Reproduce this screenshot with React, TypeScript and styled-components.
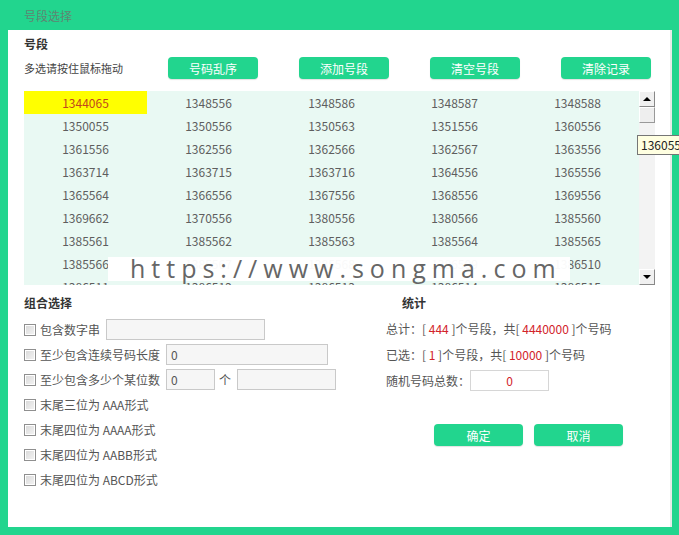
import React from "react";
import styled, { createGlobalStyle } from "styled-components";

const GREEN = "#22d58e";

const rows: string[][] = [
  ["1344065", "1348556", "1348586", "1348587", "1348588"],
  ["1350055", "1350556", "1350563", "1351556", "1360556"],
  ["1361556", "1362556", "1362566", "1362567", "1363556"],
  ["1363714", "1363715", "1363716", "1364556", "1365556"],
  ["1365564", "1366556", "1367556", "1368556", "1369556"],
  ["1369662", "1370556", "1380556", "1380566", "1385560"],
  ["1385561", "1385562", "1385563", "1385564", "1385565"],
  ["1385566", "1385567", "1385568", "1386509", "1386510"],
  ["1386511", "1386512", "1386513", "1386514", "1386515"],
];

const tools = ["号码乱序", "添加号段", "清空号段", "清除记录"];

const patterns = [
  "末尾三位为 AAA形式",
  "末尾四位为 AAAA形式",
  "末尾四位为 AABB形式",
  "末尾四位为 ABCD形式",
];

export default function App() {
  return (
    <>
      <GlobalStyle />
      <Page>
        <TitleBar>号段选择</TitleBar>
        <Panel>
          <Heading>号段</Heading>
          <Toolbar>
            <Hint>多选请按住鼠标拖动</Hint>
            {tools.map((t) => (
              <GreenButton key={t}>{t}</GreenButton>
            ))}
          </Toolbar>

          <ListBox>
            <Cells>
              {rows.map((row, ri) =>
                row.map((num, ci) => (
                  <Cell key={`${ri}-${ci}`} $selected={ri === 0 && ci === 0}>
                    {num}
                  </Cell>
                ))
              )}
            </Cells>
            <ScrollBar>
              <ScrollButton>
                <Arrow $up />
              </ScrollButton>
              <Thumb />
              <Track />
              <ScrollButton>
                <Arrow />
              </ScrollButton>
            </ScrollBar>
            <Watermark>https://www.songma.com</Watermark>
          </ListBox>

          <Bottom>
            <Column>
              <SubHeading>组合选择</SubHeading>
              <CheckRow>
                <Box />
                <Label>包含数字串</Label>
                <TextInput $w={159} defaultValue="" />
              </CheckRow>
              <CheckRow>
                <Box />
                <Label>至少包含连续号码长度</Label>
                <TextInput $w={162} defaultValue="0" />
              </CheckRow>
              <CheckRow>
                <Box />
                <Label>至少包含多少个某位数</Label>
                <TextInput $w={49} defaultValue="0" />
                <Unit>个</Unit>
                <TextInput $w={99} defaultValue="" />
              </CheckRow>
              {patterns.map((p) => (
                <CheckRow key={p}>
                  <Box />
                  <Label>{p}</Label>
                </CheckRow>
              ))}
            </Column>

            <Column>
              <SubHeading $indent={16}>统计</SubHeading>
              <StatLine>
                总计：[ <Red>444</Red> ]个号段，共[ <Red>4440000</Red> ]个号码
              </StatLine>
              <StatLine>
                已选：[ <Red>1</Red> ]个号段，共[ <Red>10000</Red> ]个号码
              </StatLine>
              <StatLine>
                随机号码总数：
                <CountInput defaultValue="0" />
              </StatLine>
              <Actions>
                <ActionButton>确定</ActionButton>
                <ActionButton>取消</ActionButton>
              </Actions>
            </Column>
          </Bottom>
        </Panel>
        <Tooltip>1360556</Tooltip>
      </Page>
    </>
  );
}

const GlobalStyle = createGlobalStyle`
  html, body {
    margin: 0;
    padding: 0;
    background: ${GREEN};
  }
  body {
    font-family: "Noto Sans CJK SC", "Noto Sans", sans-serif;
    font-size: 12px;
    color: #555;
  }
`;

const Page = styled.div`
  position: relative;
  width: 679px;
  height: 535px;
  overflow: hidden;
  background: ${GREEN};
`;

const TitleBar = styled.div`
  height: 30px;
  line-height: 32px;
  padding-left: 24px;
  font-size: 12px;
  color: #5f8672;
`;

const Panel = styled.div`
  margin-left: 8px;
  width: 646px;
  height: 497px;
  padding: 0 0 0 16px;
  background: #ffffff;
  border-right: 2px solid #e6ece9;
  box-sizing: content-box;
`;

const Heading = styled.div`
  height: 24px;
  line-height: 28px;
  font-size: 12px;
  font-weight: bold;
  color: #333;
`;

const SubHeading = styled.div<{ $indent?: number }>`
  height: 24px;
  line-height: 20px;
  padding-left: ${(p) => p.$indent ?? 0}px;
  font-size: 12px;
  font-weight: bold;
  color: #333;
`;

const Toolbar = styled.div`
  display: flex;
  align-items: center;
  gap: 41px;
  height: 22px;
  margin-top: 3px;
`;

const Hint = styled.div`
  width: 103px;
  font-size: 11px;
  color: #444;
  white-space: nowrap;
`;

const GreenButton = styled.button`
  width: 90px;
  height: 22px;
  border: none;
  border-radius: 4px;
  background: ${GREEN};
  color: #fff;
  font-family: inherit;
  font-size: 12px;
  padding: 0;
  box-shadow: 0 1px 1px rgba(0, 0, 0, 0.12);
`;

const ListBox = styled.div`
  position: relative;
  display: flex;
  width: 631px;
  height: 194px;
  margin-top: 12px;
  overflow: hidden;
`;

const Cells = styled.div`
  display: grid;
  grid-template-columns: repeat(5, 123px);
  grid-auto-rows: 23px;
  align-content: start;
  width: 615px;
  background: #e9f9f3;
`;

const Cell = styled.div<{ $selected?: boolean }>`
  display: flex;
  align-items: center;
  justify-content: center;
  font-size: 12px;
  color: ${(p) => (p.$selected ? "#c2461d" : "#5e5e5e")};
  background: ${(p) => (p.$selected ? "#ffff00" : "transparent")};
`;

const ScrollBar = styled.div`
  display: flex;
  flex-direction: column;
  width: 16px;
  background: #f3f3f3;
`;

const ScrollButton = styled.div`
  display: flex;
  align-items: center;
  justify-content: center;
  height: 14px;
  background: #f0f0f0;
  border: 1px solid;
  border-color: #fff #888 #888 #fff;
`;

const Arrow = styled.span<{ $up?: boolean }>`
  width: 0;
  height: 0;
  border-left: 4px solid transparent;
  border-right: 4px solid transparent;
  ${(p) =>
    p.$up ? "border-bottom: 4px solid #000;" : "border-top: 4px solid #000;"}
`;

const Thumb = styled.div`
  height: 14px;
  background: #eeeeee;
  border: 1px solid;
  border-color: #fff #999 #999 #fff;
`;

const Track = styled.div`
  flex: 1;
`;

const Watermark = styled.div`
  position: absolute;
  left: 84px;
  top: 166px;
  width: 440px;
  height: 24px;
  padding-left: 22px;
  background: rgba(255, 255, 255, 0.96);
  font-family: "Open Sans", "Noto Sans", sans-serif;
  font-size: 25px;
  line-height: 22px;
  letter-spacing: 6px;
  color: #666;
  white-space: nowrap;
`;

const Bottom = styled.div`
  display: grid;
  grid-template-columns: 362px 1fr;
  margin-top: 8px;
`;

const Column = styled.div`
  display: flex;
  flex-direction: column;
`;

const CheckRow = styled.div`
  display: flex;
  align-items: center;
  height: 25px;
`;

const Box = styled.span`
  width: 10px;
  height: 10px;
  margin-right: 4px;
  border: 1px solid #8f8f8f;
  background: linear-gradient(135deg, #d8d8d8, #f4f4f4);
  box-shadow: inset 0 0 0 1px #fff;
`;

const Label = styled.span`
  margin-right: 6px;
  font-size: 12px;
  color: #555;
  white-space: nowrap;
`;

const TextInput = styled.input<{ $w: number }>`
  width: ${(p) => p.$w}px;
  height: 21px;
  box-sizing: border-box;
  padding: 0 4px;
  border: 1px solid #c9c9c9;
  background: #f6f6f6;
  font-family: inherit;
  font-size: 12px;
  color: #555;
  outline: none;
`;

const Unit = styled.span`
  margin: 0 6px 0 4px;
  color: #555;
`;

const StatLine = styled.div`
  display: flex;
  align-items: center;
  height: 26px;
  margin-top: -2px;
  margin-bottom: 2px;
  white-space: pre;
  color: #555;
`;

const Red = styled.span`
  color: #d2232a;
`;

const CountInput = styled.input`
  width: 79px;
  height: 21px;
  box-sizing: border-box;
  border: 1px solid #d6d6d6;
  background: #fff;
  text-align: center;
  font-family: inherit;
  font-size: 12px;
  color: #d2232a;
  outline: none;
`;

const Actions = styled.div`
  display: flex;
  gap: 11px;
  margin: 29px 0 0 48px;
`;

const ActionButton = styled(GreenButton)`
  width: 89px;
`;

const Tooltip = styled.div`
  position: absolute;
  left: 637px;
  top: 135px;
  height: 18px;
  line-height: 18px;
  padding: 0 3px;
  border: 1px solid #767676;
  background: #ffffe1;
  font-size: 12px;
  color: #222;
  white-space: nowrap;
`;
